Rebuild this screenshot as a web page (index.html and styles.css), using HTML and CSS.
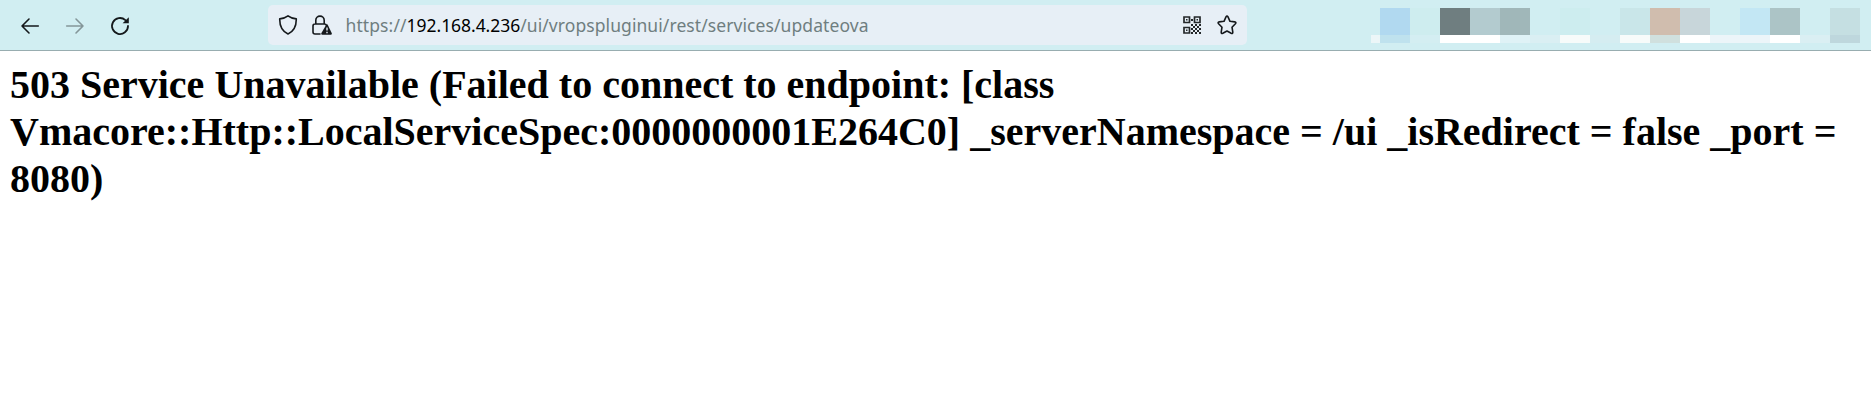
FILE: index.html
```html
<!DOCTYPE html>
<html lang="en">
<head>
<meta charset="utf-8">
<title>503 Service Unavailable</title>
<link rel="stylesheet" href="styles.css">
</head>
<body>
<header class="toolbar">
  <nav class="nav">
    <svg class="icon" viewBox="0 0 20 20"><path d="M18.3 10H2M9 3L2 10l7 7"/></svg>
    <svg class="icon icon-disabled" viewBox="0 0 20 20"><path d="M1.7 10H18M11 3l7 7-7 7"/></svg>
    <svg class="icon reload" viewBox="0 0 20 20"><path d="M15.4 4.1A8 8 0 1 0 18 10"/><path class="solid" d="M18.8 1.3v6h-6.2z"/></svg>
  </nav>
  <div class="urlbar">
    <svg class="icon shield" viewBox="0 0 20 20"><path d="M10 .9C7.8 2.7 5 3.5 1.7 3.9 1.6 11 4 16.3 10 19c6-2.7 8.400-8 8.300-15.100C15 3.500 12.200 2.700 10 .9z"/></svg>
    <svg class="icon lock" viewBox="0 0 20 20"><path d="M3.800 9V5.300a4.200 4.200 0 0 1 8.400 0V9M8 19H3a2 2 0 0 1-2-2v-6a2 2 0 0 1 2-2h9.500q1.500 0 2 1.500"/><path class="solid" d="M14.400 9.600q.6-.9 1.200 0l4.200 8.700q.3 1.500-1 1.500h-8.500q-1.300 0-1-1.500z"/><path class="mark" d="M15 12.500v3M15 16.800v1.500"/></svg>
    <div class="url"><span class="scheme">https://</span><span class="host">192.168.4.236</span><span class="path">/ui/vropspluginui/rest/services/updateova</span></div>
    <svg class="qr" viewBox="0 0 18 18"><path class="finder" d="M1 1h5.500v5.500H1zM11.500 1H17v5.500h-5.500zM1 11.500h5.500V17H1z"/><path class="solid" d="M3 3h1.500v1.500H3zM13.500 3H15v1.500h-1.500zM3 13.500h1.500V15H3zM8 3h2v2H8zM8 8h2v2H8zM12 8h2v2h-2zM16 8h2v2h-2zM10 10h2v2h-2zM14 10h2v2h-2zM8 12h2v2H8zM12 12h2v2h-2zM16 12h2v2h-2zM10 14h2v2h-2zM14 14h2v2h-2zM12 16h2v2h-2zM16 16h2v2h-2zM8 16h2v2H8z"/></svg>
    <svg class="icon star" viewBox="0 0 20 20"><path d="M9 1.900q1-1.900 2 0l2 4.400 4.700.6q2 .4.700 1.800l-3.400 3.500.8 4.900q.1 1.900-1.600 1.100L10 16l-4.200 2.200q-1.700.8-1.600-1.100l.8-4.900-3.400-3.500Q.3 7.300 2.300 6.900L7 6.300z"/></svg>
  </div>
  <div class="extensions" aria-hidden="true">
    <i class="edge"></i>
    <i class="c0"></i><i class="c1"></i><i class="c2"></i><i class="c3"></i>
    <i class="c4"></i><i class="c5"></i><i class="c6"></i><i class="c7"></i>
    <i class="c8"></i><i class="c9"></i><i class="c10"></i><i class="c11"></i>
    <i class="c12"></i><i class="c13"></i><i class="c14"></i><i class="c15"></i>
  </div>
</header>
<main class="page">
  <h1 class="error">503 Service Unavailable (Failed to connect to endpoint: [class Vmacore::Http::LocalServiceSpec:0000000001E264C0] _serverNamespace = /ui _isRedirect = false _port = 8080)</h1>
</main>
</body>
</html>
```

FILE: styles.css
```css
* { box-sizing: border-box; }
body { margin: 0; background: #fff; }

.toolbar {
  display: flex;
  height: 51px;
  background: #d1eef2;
  border-bottom: 1px solid #98adb0;
}
.nav {
  display: flex;
  align-items: center;
  gap: 25px;
  width: 268px;
  padding: 1px 0 0 20px;
}
.icon {
  flex: none;
  width: 20px;
  height: 20px;
  fill: none;
  stroke: #15191c;
  stroke-width: 1.6;
  stroke-linecap: round;
  stroke-linejoin: round;
}
.icon-disabled { stroke: #849699; }
.reload { stroke-width: 1.8; }
.icon .solid { fill: #15191c; stroke: none; }
.icon .mark { stroke: #e7eff6; stroke-width: 1.4; stroke-linecap: butt; }

.urlbar {
  display: flex;
  align-items: center;
  width: 979px;
  height: 40px;
  margin-top: 5px;
  padding: 0 10px;
  border-radius: 5px;
  background: #e7eff6;
}
.lock { margin-left: 14px; }
.url {
  flex: 1;
  margin-left: 13.5px;
  font: 17.5px/24px "Noto Sans", "Open Sans", sans-serif;
  white-space: nowrap;
  color: #6f7e80;
}
.scheme { letter-spacing: 0.1px; }
.host { color: #000; letter-spacing: -0.05px; }
.path { letter-spacing: 0.08px; }
.qr { width: 18px; height: 18px; fill: #24282a; }
.finder { fill: none; stroke: #24282a; stroke-width: 1.7; }
.star { margin-left: 16px; }

.extensions { display: flex; margin: 8px 0 0 124px; }
.extensions i {
  width: 30px;
  height: 35px;
  background: linear-gradient(var(--top, #d1eef2) 27px, var(--low) 27px);
}
.extensions .edge { width: 9px; --low: #ecf6f8; }
.c0 { --top: #b1d9f0; --low: #bfe2ee; }
.c1 { --top: #ceedef; --low: #d4eef2; }
.c2 { --top: #6f7e80; --low: #fff; }
.c3 { --top: #b3cbcf; --low: #fff; }
.c4 { --top: #a0b7b9; --low: #dff2f6; }
.c5 { --low: #daeff3; }
.c6 { --top: #cdedef; --low: #f7fbfa; }
.c7 { --low: #d5edf1; }
.c8 { --top: #c9e6e9; --low: #f7fbfa; }
.c9 { --top: #d0bdae; --low: #d0e0de; }
.c10 { --top: #c8d6da; --low: #fff; }
.c11 { --low: #ecf5f9; }
.c12 { --top: #c3e7f4; --low: #ecf5f9; }
.c13 { --top: #acc4c6; --low: #fff; }
.c14 { --low: #daeff3; }
.c15 { --top: #c5dfe2; --low: #bed7dd; }

.page { padding: 10px; }
.error {
  margin: 0;
  font: bold 40px/47px "Liberation Serif", "Times New Roman", serif;
  color: #000;
}
```
